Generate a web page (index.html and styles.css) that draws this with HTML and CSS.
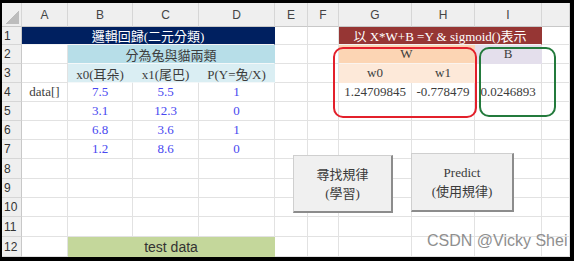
FILE: index.html
```html
<!DOCTYPE html>
<html lang="zh-Hant">
<head>
<meta charset="utf-8">
<title>邏輯回歸</title>
<link rel="stylesheet" href="styles.css">
</head>
<body>
<div class="sheet">
  <div class="grid">
    <!-- header -->
    <div class="hd corner"><span class="tri"></span></div>
    <div class="hd">A</div><div class="hd">B</div><div class="hd">C</div><div class="hd">D</div><div class="hd">E</div><div class="hd">F</div><div class="hd">G</div><div class="hd">H</div><div class="hd">I</div><div class="hd"></div>
    <!-- row 1 -->
    <div class="rh">1</div>
    <div class="c navy span4">邏輯回歸(二元分類)</div>
    <div class="c"></div><div class="c"></div>
    <div class="c maroon span3">以 X*W+B =Y &amp; sigmoid()表示</div>
    <div class="c"></div>
    <!-- row 2 -->
    <div class="rh">2</div>
    <div class="c"></div>
    <div class="c blue1 span3 sans">分為兔與貓兩類</div>
    <div class="c"></div><div class="c"></div>
    <div class="c peach1 span2">W</div>
    <div class="c lav">B</div>
    <div class="c"></div>
    <!-- row 3 -->
    <div class="rh">3</div>
    <div class="c"></div>
    <div class="c blue2">x0(耳朵)</div>
    <div class="c blue2">x1(尾巴)</div>
    <div class="c blue2">P(Y=兔/X)</div>
    <div class="c"></div><div class="c"></div>
    <div class="c peach2">w0</div>
    <div class="c peach2">w1</div>
    <div class="c"></div><div class="c"></div>
    <!-- row 4 -->
    <div class="rh">4</div>
    <div class="c">data[]</div>
    <div class="c num">7.5</div><div class="c num">5.5</div><div class="c num">1</div>
    <div class="c"></div><div class="c"></div>
    <div class="c">1.24709845</div><div class="c">-0.778479</div><div class="c">0.0246893</div>
    <div class="c"></div>
    <!-- row 5 -->
    <div class="rh">5</div>
    <div class="c"></div>
    <div class="c num">3.1</div><div class="c num">12.3</div><div class="c num">0</div>
    <div class="c"></div><div class="c"></div><div class="c"></div><div class="c"></div><div class="c"></div><div class="c"></div>
    <!-- row 6 -->
    <div class="rh">6</div>
    <div class="c"></div>
    <div class="c num">6.8</div><div class="c num">3.6</div><div class="c num">1</div>
    <div class="c"></div><div class="c"></div><div class="c"></div><div class="c"></div><div class="c"></div><div class="c"></div>
    <!-- row 7 -->
    <div class="rh">7</div>
    <div class="c"></div>
    <div class="c num">1.2</div><div class="c num">8.6</div><div class="c num">0</div>
    <div class="c"></div><div class="c"></div><div class="c"></div><div class="c"></div><div class="c"></div><div class="c"></div>
    <!-- row 8 -->
    <div class="rh">8</div>
    <div class="c"></div><div class="c"></div><div class="c"></div><div class="c"></div><div class="c"></div><div class="c"></div><div class="c"></div><div class="c"></div><div class="c"></div><div class="c"></div>
    <!-- row 9 -->
    <div class="rh">9</div>
    <div class="c"></div><div class="c"></div><div class="c"></div><div class="c"></div><div class="c"></div><div class="c"></div><div class="c"></div><div class="c"></div><div class="c"></div><div class="c"></div>
    <!-- row 10 -->
    <div class="rh">10</div>
    <div class="c"></div><div class="c"></div><div class="c"></div><div class="c"></div><div class="c"></div><div class="c"></div><div class="c"></div><div class="c"></div><div class="c"></div><div class="c"></div>
    <!-- row 11 -->
    <div class="rh">11</div>
    <div class="c"></div><div class="c"></div><div class="c"></div><div class="c"></div><div class="c"></div><div class="c"></div><div class="c"></div><div class="c"></div><div class="c"></div><div class="c"></div>
    <!-- row 12 -->
    <div class="rh">12</div>
    <div class="c"></div>
    <div class="c green span3 sansl">test data</div>
    <div class="c"></div><div class="c"></div><div class="c"></div><div class="c"></div><div class="c"></div><div class="c"></div>
  </div>

  <div class="frame frame-red"></div>
  <div class="frame frame-green"></div>

  <div class="btn btn-learn"><span>尋找規律</span><span>(學習)</span></div>
  <div class="btn btn-predict"><span class="lat">Predict</span><span>(使用規律)</span></div>

  <div class="mark">CSDN @Vicky Shei</div>
</div>
</body>
</html>
```

FILE: styles.css
```css
html, body {
  margin: 0;
  padding: 0;
}
body {
  background: #000;
  width: 574px;
  height: 261px;
  box-sizing: border-box;
  padding: 3px 4px 4px 2px;
  overflow: hidden;
}
.sheet {
  position: relative;
  width: 568px;
  height: 254px;
  background: #fff;
  overflow: hidden;
}
.grid {
  display: grid;
  grid-template-columns: 20px 46px 65px 66px 76px 33px 31px 73px 63px 67px 28px;
  grid-template-rows: 24px 18px 19px 19px 19px 19px 19px 19px 20px 19px 19px 20px 20px;
  font: 13px "Liberation Serif", "Noto Sans CJK TC", serif;
  color: #3c3c3c;
}
.grid > div {
  box-sizing: border-box;
  display: flex;
  align-items: center;
  justify-content: center;
  white-space: nowrap;
  min-width: 0;
}
.hd {
  background: #efefef;
  border-right: 1px solid #d6d6d6;
  border-bottom: 1px solid #c8c8c8;
  font: 12px "Liberation Sans", sans-serif;
  color: #444;
  padding-top: 1px;
}
.corner {
  justify-content: flex-end !important;
  align-items: flex-end !important;
  padding: 0 2px 2px 0;
}
.tri {
  width: 14px;
  height: 14px;
  background: linear-gradient(to bottom right, transparent 50%, #bdbdbd 50%);
}
.rh {
  background: #efefef;
  border-right: 1px solid #c8c8c8;
  border-bottom: 1px solid #d6d6d6;
  font: 12px "Liberation Sans", sans-serif;
  color: #333;
  justify-content: flex-start !important;
  padding-left: 2px;
}
.c {
  border-right: 1px solid #e2e2e2;
  border-bottom: 1px solid #e2e2e2;
}
.span2 { grid-column: span 2; }
.span3 { grid-column: span 3; }
.span4 { grid-column: span 4; }
.navy {
  background: #002060;
  color: #fff;
  border-color: #002060 !important;
  border-bottom-color: #f4f4f4 !important;
}
.maroon {
  background: #963634;
  color: #fff;
  border-color: #963634 !important;
  border-bottom-color: #f4f4f4 !important;
}
.blue1 {
  background: #b7dee8;
  border-color: #b7dee8 !important;
  border-bottom-color: #f4f8f9 !important;
}
.blue2 {
  background: #daeef3;
  border-color: #daeef3 !important;
  border-bottom-color: #f4f8f9 !important;
}
.peach1 {
  background: #fcd5b4;
  border-color: #fcd5b4 !important;
  border-bottom-color: #fbf4ee !important;
}
.peach2 {
  background: #fde9d9;
  border-color: #fde9d9 !important;
}
.lav {
  background: #e4dfec;
  border-color: #e4dfec !important;
}
.green {
  background: #c4d79b;
  border-color: #c4d79b !important;
}
.sans {
  font: 13px "Noto Sans CJK TC", sans-serif;
}
.sansl {
  font: 14px "Liberation Sans", sans-serif;
  color: #333;
}
.num {
  color: #4848f0;
}
.frame {
  position: absolute;
  box-sizing: border-box;
  border-radius: 10px;
  border: 2px solid;
}
.frame-red {
  left: 331px;
  top: 44px;
  width: 144px;
  height: 71px;
  border-color: #e3202b;
}
.frame-green {
  left: 477px;
  top: 44px;
  width: 77px;
  height: 70px;
  border-color: #237a3c;
}
.btn {
  position: absolute;
  box-sizing: border-box;
  background: #f0f0f0;
  border: 1px solid #cfcfcf;
  border-right: 2px solid #8c8c8c;
  border-bottom: 2px solid #8c8c8c;
  display: flex;
  flex-direction: column;
  align-items: center;
  justify-content: center;
  font: 13px "Liberation Serif", "Noto Sans CJK TC", serif;
  color: #3a3a3a;
  line-height: 19px;
}
.btn-learn {
  left: 291px;
  top: 152px;
  width: 100px;
  height: 58px;
}
.btn-predict {
  left: 409px;
  top: 150px;
  width: 103px;
  height: 59px;
}
.mark {
  position: absolute;
  left: 425px;
  top: 229px;
  font: 16px "Liberation Sans", sans-serif;
  color: #8f8f8f;
  white-space: nowrap;
}
```
